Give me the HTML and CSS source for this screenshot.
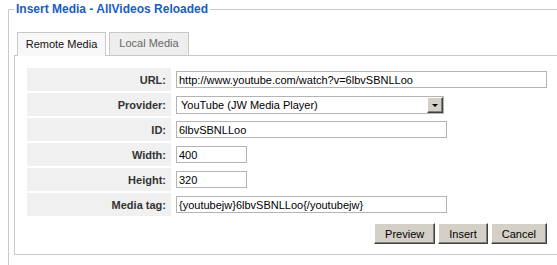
FILE: index.html
```html
<!DOCTYPE html>
<html>
<head>
<meta charset="utf-8">
<link rel="stylesheet" href="styles.css">
</head>
<body>
<div class="page">
<fieldset class="box">
  <legend class="box-title">Insert Media - AllVideos Reloaded</legend>
  <div class="tabs">
    <div class="tab tab-active">Remote Media</div>
    <div class="tab tab-local">Local Media</div>
  </div>
  <div class="panel">
    <table class="form">
      <tr>
        <td class="key">URL:</td>
        <td class="val"><input class="field field-url" type="text" value="http://www.youtube.com/watch?v=6lbvSBNLLoo"></td>
      </tr>
      <tr>
        <td class="key">Provider:</td>
        <td class="val">
          <div class="select">
            <span class="select-text">YouTube (JW Media Player)</span>
            <span class="select-btn"><span class="arrow"></span></span>
          </div>
        </td>
      </tr>
      <tr>
        <td class="key">ID:</td>
        <td class="val"><input class="field field-mid" type="text" value="6lbvSBNLLoo"></td>
      </tr>
      <tr>
        <td class="key">Width:</td>
        <td class="val"><input class="field field-small" type="text" value="400"></td>
      </tr>
      <tr>
        <td class="key">Height:</td>
        <td class="val"><input class="field field-small" type="text" value="320"></td>
      </tr>
      <tr>
        <td class="key">Media tag:</td>
        <td class="val"><input class="field field-mid" type="text" value="{youtubejw}6lbvSBNLLoo{/youtubejw}"></td>
      </tr>
      <tr>
        <td class="actions" colspan="2">
          <div class="buttons">
            <button class="btn" type="button">Preview</button>
            <button class="btn" type="button">Insert</button>
            <button class="btn" type="button">Cancel</button>
          </div>
        </td>
      </tr>
    </table>
  </div>
</fieldset>
</div>
</body>
</html>
```

FILE: styles.css
```css
html, body {
  margin: 0;
  padding: 0;
  background: #fff;
  overflow: hidden;
}

body {
  font-family: "Liberation Sans", Arial, sans-serif;
  font-size: 11px;
  color: #000;
}

.page {
  width: 557px;
  height: 265px;
  overflow: hidden;
}

.box {
  margin: 2px 0 0 8px;
  padding: 16px 0 0 5px;
  width: 640px;
  height: 280px;
  border: 1px solid #cbcbcb;
  box-sizing: border-box;
}

.box-title {
  padding: 0 2px;
  font-size: 12px;
  line-height: 14px;
  font-weight: bold;
  color: #1a5cc6;
}

.tabs {
  display: flex;
  align-items: flex-end;
  gap: 3px;
  margin-left: 3px;
  margin-bottom: -1px;
  position: relative;
  z-index: 1;
}

.tab {
  box-sizing: border-box;
  border: 1px solid #c8c8c8;
  border-bottom: none;
  text-align: center;
  line-height: 13px;
  white-space: nowrap;
}

.tab-active {
  width: 89px;
  height: 24px;
  padding-top: 5px;
  background: #f8f8f8;
  color: #111;
}

.tab-local {
  width: 80px;
  height: 23px;
  padding-top: 4px;
  background: #eeeeee;
  color: #666;
  margin-bottom: 1px;
}

.panel {
  box-sizing: border-box;
  width: 620px;
  height: 200px;
  border: 1px solid #c8c8c8;
  padding: 10px;
  background: #fff;
}

.form {
  border-collapse: separate;
  border-spacing: 2px;
}

.form td {
  padding: 0;
}

.key {
  width: 144px;
  height: 23px;
  box-sizing: border-box;
  background: #f0f0f0;
  text-align: right;
  font-weight: bold;
  color: #333;
  padding: 0 5px 0 0 !important;
}

.val {
  padding: 0 2px 0 3px !important;
  vertical-align: middle;
}

.field {
  display: block;
  box-sizing: border-box;
  height: 17px;
  margin: 0;
  padding: 0 2px;
  border: 1px solid #b4b4b4;
  font-family: "Liberation Sans", Arial, sans-serif;
  font-size: 11px;
  color: #000;
  background: #fff;
  outline: none;
}

.field-url { width: 371px; }
.field-mid { width: 271px; }
.field-small { width: 71px; }

.select {
  box-sizing: border-box;
  width: 268px;
  height: 18px;
  border: 1px solid #b4b4b4;
  display: flex;
  align-items: center;
  background: #fff;
}

.select-text {
  flex: 1;
  padding-left: 4px;
  line-height: 14px;
}

.select-btn {
  box-sizing: border-box;
  width: 16px;
  height: 16px;
  background: #d4d0c8;
  border: 1px solid;
  border-color: #fff #404040 #404040 #fff;
  box-shadow: inset -1px -1px #808080;
  display: flex;
  align-items: center;
  justify-content: center;
}

.arrow {
  width: 0;
  height: 0;
  border-left: 3px solid transparent;
  border-right: 3px solid transparent;
  border-top: 3px solid #000;
  margin-top: 1px;
}

.actions {
  padding: 5px 2px 0 0 !important;
}

.buttons {
  display: flex;
  justify-content: flex-end;
  gap: 3px;
}

.btn {
  box-sizing: border-box;
  height: 21px;
  margin: 0;
  padding: 0 10px;
  font-family: "Liberation Sans", Arial, sans-serif;
  font-size: 11px;
  color: #000;
  background: #d4d0c8;
  border: 1px solid;
  border-color: #fff #404040 #404040 #fff;
  box-shadow: inset -1px -1px #808080;
  border-radius: 0;
}
```
